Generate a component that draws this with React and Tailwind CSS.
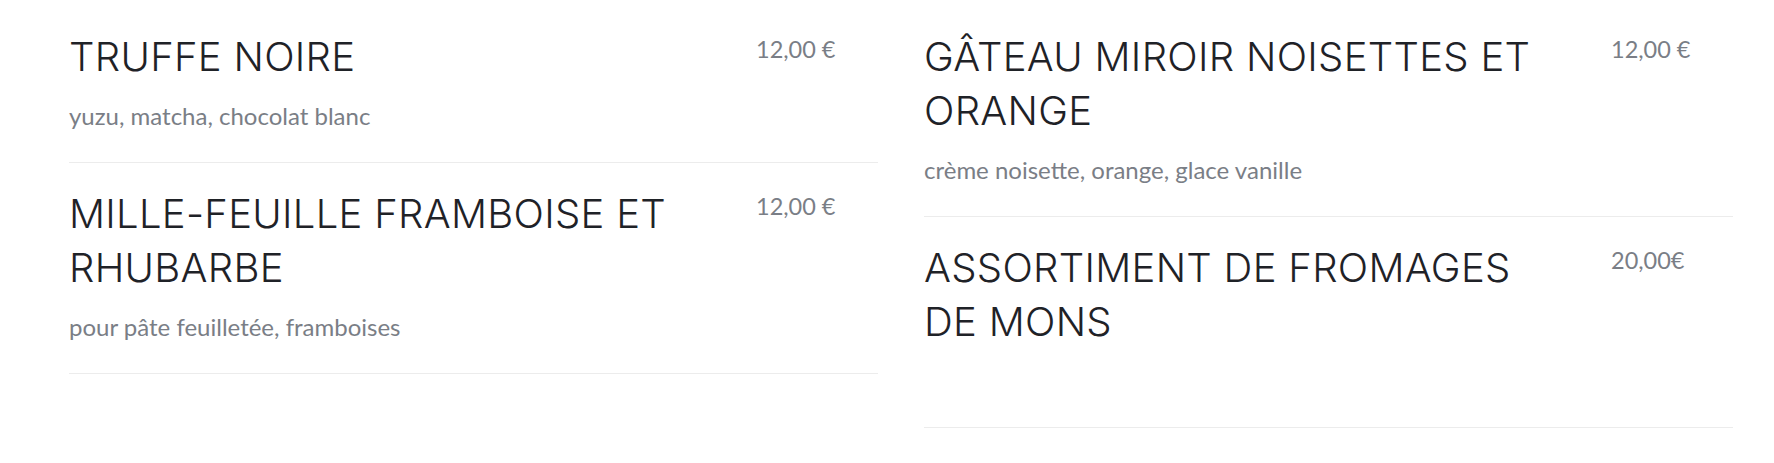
const items = [
  [
    { title: "TRUFFE NOIRE", desc: "yuzu, matcha, chocolat blanc", price: "12,00 €" },
    { title: "MILLE-FEUILLE FRAMBOISE ET RHUBARBE", desc: "pour pâte feuilletée, framboises", price: "12,00 €" },
  ],
  [
    { title: "GÂTEAU MIROIR NOISETTES ET ORANGE", desc: "crème noisette, orange, glace vanille", price: "12,00 €" },
    { title: "ASSORTIMENT DE FROMAGES DE MONS", desc: "", price: "20,00€" },
  ],
];

function MenuItem({ item }) {
  return (
    <div className="flex border-b border-[#ececec] pt-[24px] pb-[30px]">
      <div className="w-[687px]">
        <h3 className="max-w-[620px] font-['Inter',sans-serif] text-[40px] leading-[54px] font-light tracking-[0.3px] text-[#1f2227]">
          {item.title}
        </h3>
        <p className="mt-[15px] h-[33px] font-['Lato',sans-serif] text-[24px] leading-[33px] text-[#7a7e86]">
          {item.desc}
        </p>
      </div>
      <div className="mt-[3px] w-[122px] font-['Lato',sans-serif] text-[23.5px] leading-[33px] text-[#7a7e86]">
        {item.price}
      </div>
    </div>
  );
}

export default function App() {
  return (
    <div className="min-h-[463px] bg-white pt-[6px] pl-[69px] pr-[41px]">
      <div className="grid grid-cols-2 gap-x-[46px]">
        {items.map((col, i) => (
          <div key={i}>
            {col.map((item) => (
              <MenuItem key={item.title} item={item} />
            ))}
          </div>
        ))}
      </div>
    </div>
  );
}
